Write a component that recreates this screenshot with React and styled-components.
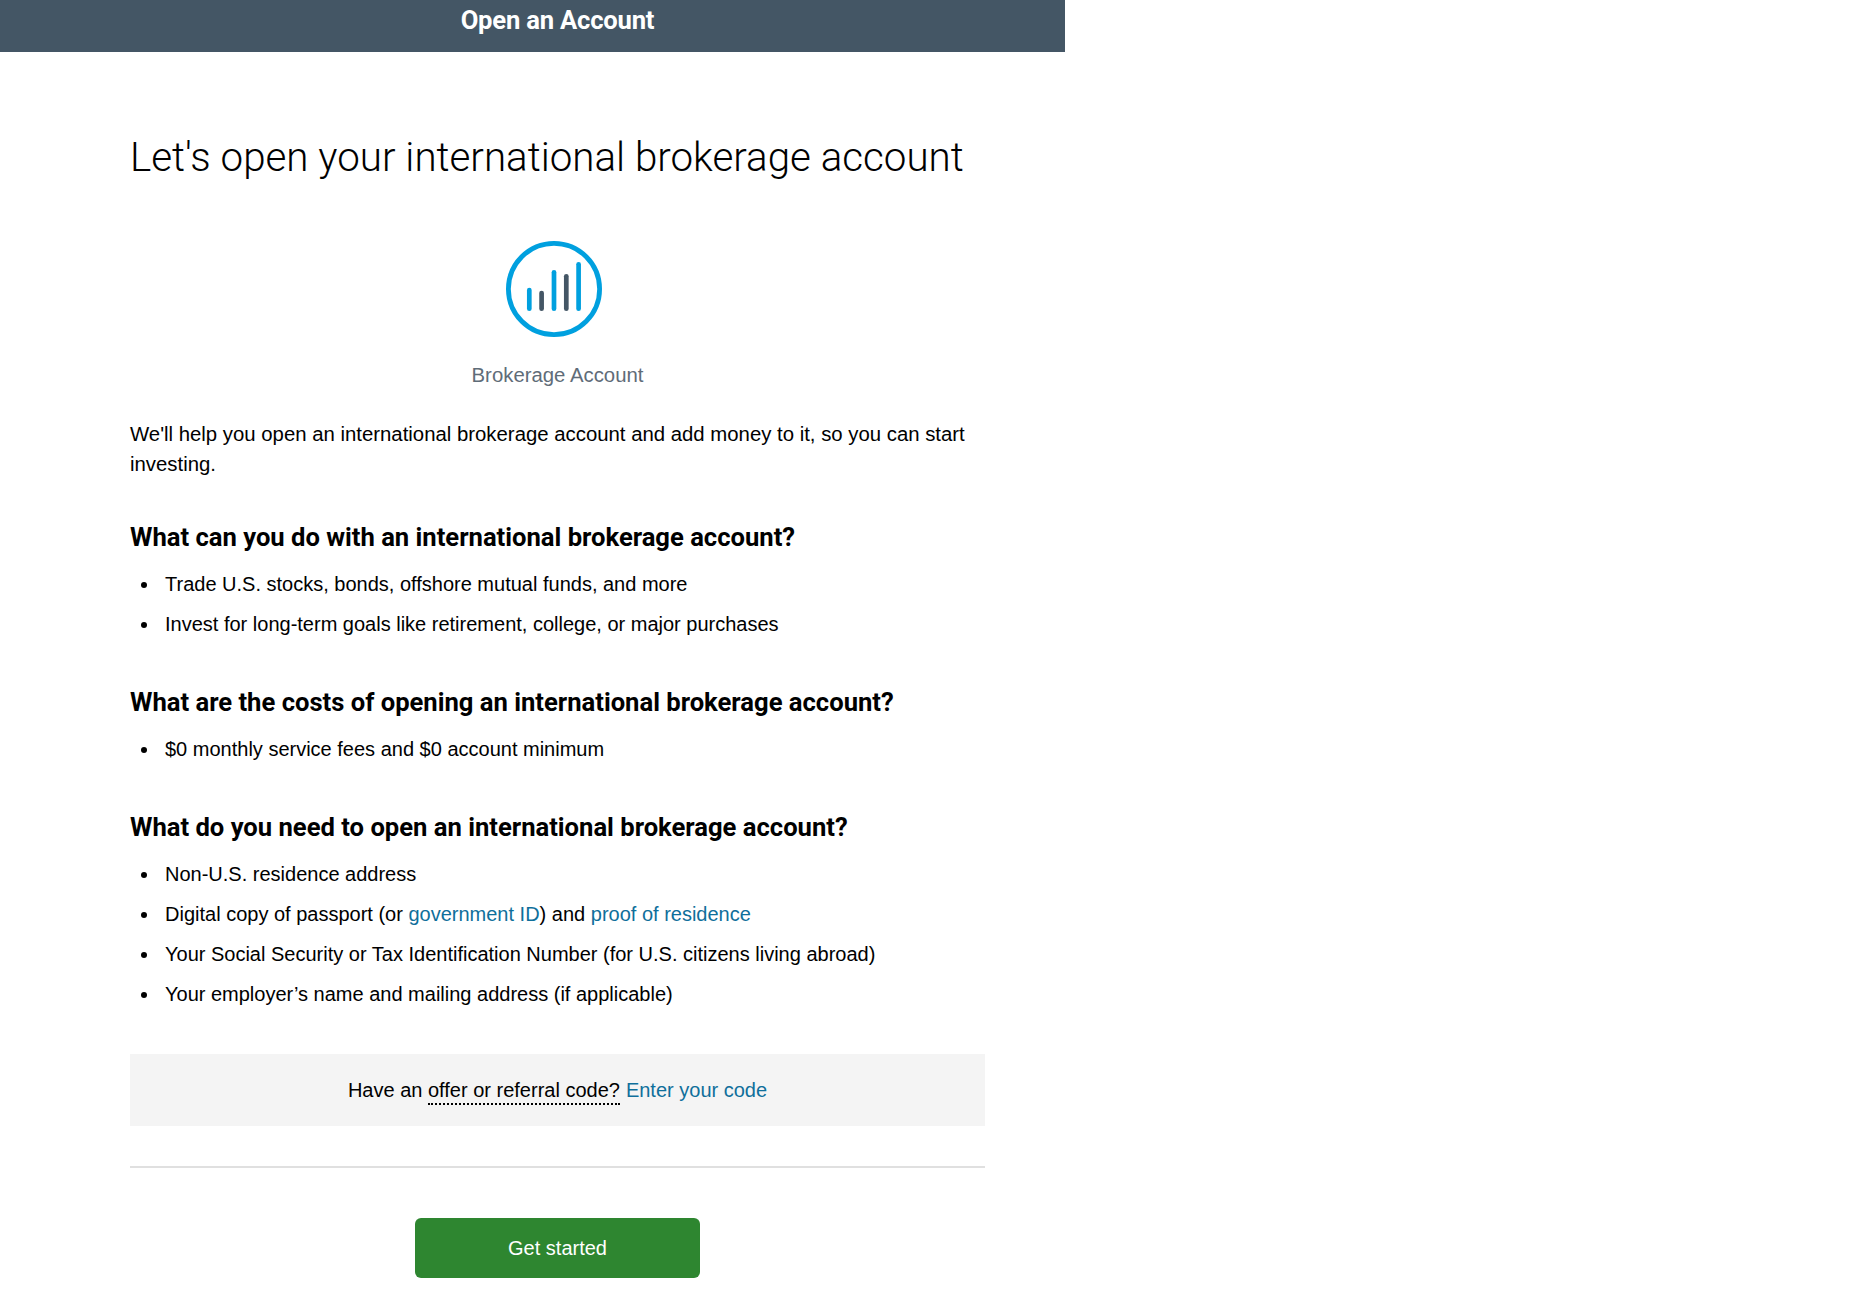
import React from "react";
import styled, { createGlobalStyle } from "styled-components";

const Global = createGlobalStyle`
  html, body { margin: 0; padding: 0; background: #fff; }
  body { font-family: "Liberation Sans", Arial, sans-serif; color: #000; }
`;
const Page = styled.div`width: 1065px;`;
const Header = styled.header`
  height: 52px; box-sizing: border-box; padding-left: 50px; background: #445665; color: #fff; text-align: center;
  font: 700 25.6px/41px "Roboto", sans-serif; letter-spacing: -0.2px;
`;
const Main = styled.main`padding: 82px 80px 0 130px; display: flex; flex-direction: column;`;
const Title = styled.h1`
  margin: 0; font: 300 40.3px/48px "Roboto", sans-serif; color: #000; white-space: nowrap;
`;
const Product = styled.div`display: flex; flex-direction: column; align-items: center; margin-top: 58px;`;
const IconWrap = styled.svg`width: 98px; height: 98px; margin-left: -8px; display: block;`;
const ProductLabel = styled.div`margin-top: 25px; font-size: 20.35px; line-height: 24px; color: #5f6c78;`;
const Intro = styled.p`margin: 32px 0 0; font-size: 20.35px; line-height: 30px;`;
const Section = styled.h2`
  margin: ${(p) => p.$top}px 0 0; font: 700 25.6px/32px "Roboto", sans-serif; color: #000; white-space: nowrap;
`;
const List = styled.ul`margin: 16px 0 0; padding: 0 0 0 35px; list-style: none;`;
const Item = styled.li`
  font-size: 20px; line-height: 30px; margin-bottom: 10px; white-space: nowrap;
  &::before {
    content: ""; display: inline-block; width: 6px; height: 6px; border-radius: 50%; background: #000;
    margin: 0 18.5px 0 -24.5px; vertical-align: 3px;
  }
`;
const Link = styled.a`color: #0f6f9b; text-decoration: none;`;
const Offer = styled.div`
  margin-top: 35px; height: 72px; background: #f4f4f4; display: flex; align-items: center; justify-content: center;
  font-size: 20px; gap: 6px;
`;
const Dotted = styled.span`border-bottom: 2px dotted #000; padding-bottom: 2px;`;
const Rule = styled.hr`margin: 40px 0 0; border: 0; border-top: 2px solid #e0e0e0;`;
const Actions = styled.div`display: flex; justify-content: center; margin-top: 50px;`;
const Primary = styled.button`
  width: 285px; height: 60px; border: 0; border-radius: 6px; background: #2e8630; color: #fff;
  font: 400 20px "Liberation Sans", Arial, sans-serif;
`;

const bars = [
  { x: 24.3, top: 50, c: "#00a0df" },
  { x: 36.6, top: 53, c: "#445665" },
  { x: 49, top: 32.3, c: "#00a0df" },
  { x: 61.3, top: 36.3, c: "#445665" },
  { x: 73.6, top: 24.3, c: "#00a0df" },
];

export default function App() {
  return (
    <Page>
      <Global />
      <Header>Open an Account</Header>
      <Main>
        <Title>Let's open your international brokerage account</Title>
        <Product>
          <IconWrap viewBox="0 0 98 98" aria-hidden="true">
            <circle cx="49" cy="49" r="45.6" fill="none" stroke="#00a0df" strokeWidth="4.8" />
            {bars.map((b) => (
              <line key={b.x} x1={b.x} x2={b.x} y1={b.top} y2="68.7" stroke={b.c} strokeWidth="4.7" strokeLinecap="round" />
            ))}
          </IconWrap>
          <ProductLabel>Brokerage Account</ProductLabel>
        </Product>
        <Intro>We'll help you open an international brokerage account and add money to it, so you can start investing.</Intro>
        <Section $top={42}>What can you do with an international brokerage account?</Section>
        <List>
          <Item>Trade U.S. stocks, bonds, offshore mutual funds, and more</Item>
          <Item>Invest for long-term goals like retirement, college, or major purchases</Item>
        </List>
        <Section $top={37}>What are the costs of opening an international brokerage account?</Section>
        <List>
          <Item>$0 monthly service fees and $0 account minimum</Item>
        </List>
        <Section $top={37}>What do you need to open an international brokerage account?</Section>
        <List>
          <Item>Non-U.S. residence address</Item>
          <Item>Digital copy of passport (or <Link href="#">government ID</Link>) and <Link href="#">proof of residence</Link></Item>
          <Item>Your Social Security or Tax Identification Number (for U.S. citizens living abroad)</Item>
          <Item>Your employer’s name and mailing address (if applicable)</Item>
        </List>
        <Offer>
          <span>Have an <Dotted>offer or referral code?</Dotted></span>
          <Link href="#">Enter your code</Link>
        </Offer>
        <Rule />
        <Actions>
          <Primary>Get started</Primary>
        </Actions>
      </Main>
    </Page>
  );
}
